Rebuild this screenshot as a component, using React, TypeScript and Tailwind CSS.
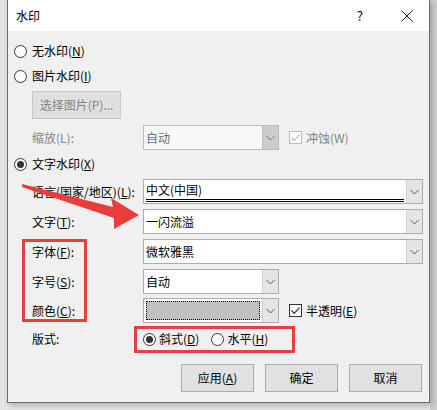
import React from "react";

const font = { fontFamily: '"Noto Sans CJK SC", "Noto Sans", sans-serif' };

function Radio({ checked }: { checked?: boolean }) {
  return (
    <span className="w-[13px] h-[13px] rounded-full border border-[#333] bg-white flex items-center justify-center shrink-0">
      {checked && <span className="w-[7px] h-[7px] rounded-full bg-[#333]" />}
    </span>
  );
}

function Check({ disabled }: { disabled?: boolean }) {
  return (
    <span
      className={
        "w-[13px] h-[13px] border bg-white flex items-center justify-center shrink-0 " +
        (disabled ? "border-[#bcbcbc]" : "border-[#333]")
      }
    >
      <svg width="11" height="11" viewBox="0 0 11 11">
        <path d="M1.5 5.5 L4.2 8.3 L9.6 2.6" fill="none" stroke={disabled ? "#bcbcbc" : "#333"} strokeWidth="1.2" />
      </svg>
    </span>
  );
}

function Chevron({ color = "#555" }: { color?: string }) {
  return (
    <svg width="9" height="6" viewBox="0 0 9 6">
      <path d="M0.5 1 L4.5 5 L8.5 1" fill="none" stroke={color} strokeWidth="1" />
    </svg>
  );
}

function Combo({
  text,
  wide,
  disabled,
  underline,
  color,
}: {
  text?: string;
  wide?: boolean;
  disabled?: boolean;
  underline?: boolean;
  color?: boolean;
}) {
  return (
    <div
      className={
        "h-[25px] flex border shrink-0 " +
        (wide ? "w-[280px] " : "w-[136px] ") +
        (disabled ? "border-[#bcbcbc] bg-[#f8f8f8]" : "border-[#adadad] bg-white")
      }
    >
      <div className={"flex-1 relative flex items-center px-[2px] " + (underline ? "pb-[3px]" : "")}>
        {color ? (
          <div className="absolute inset-[2px] bg-[#c0c0c0] border border-dotted border-black" />
        ) : (
          <span className={"text-[12px] leading-none " + (disabled ? "text-[#6d6d6d]" : "text-black")}>{text}</span>
        )}
        {underline && <div className="absolute left-[2px] right-[2px] bottom-[1px] h-[3px] border-y border-black" />}
      </div>
      <div
        className={
          "w-[16px] flex items-center justify-center border-l " +
          (disabled ? "bg-[#cccccc] border-[#bcbcbc]" : "bg-[#e5e5e5] border-[#d0d0d0]")
        }
      >
        <Chevron color={disabled ? "#777" : "#555"} />
      </div>
    </div>
  );
}

function Btn({ children, disabled, w = "w-[73px]" }: { children: React.ReactNode; disabled?: boolean; w?: string }) {
  return (
    <div
      className={
        w +
        " h-[28px] flex items-center justify-center text-[12px] border " +
        (disabled ? "bg-[#e0e0e0] border-[#c8c8c8] text-[#838383]" : "bg-[#e1e1e1] border-[#adadad] text-black")
      }
    >
      {children}
    </div>
  );
}

function Row({ label, children, mt }: { label: React.ReactNode; children: React.ReactNode; mt: string }) {
  return (
    <div className={"flex items-center h-[25px] " + mt}>
      <div className="w-[135px] shrink-0 pl-[24px] text-[12px] text-black whitespace-nowrap">{label}</div>
      {children}
    </div>
  );
}

export default function App() {
  return (
    <div className="w-[437px] h-[410px] bg-[#e4e4e4] relative overflow-hidden" style={font}>
      <div className="absolute left-[430px] top-[0px] w-[7px] h-[410px] bg-[#cfcfcf]" />
      <div className="ml-[7px] w-[423px] h-[403px] border-x border-b border-[#6b6b6b] bg-[#f0f0f0] flex flex-col relative shadow-[2px_2px_6px_rgba(0,0,0,0.25)]">
        {/* title */}
        <div className="h-[31px] bg-white flex items-center pl-[8px] pr-[14px] shrink-0">
          <span className="text-[12px] text-black">水印</span>
          <span className="ml-auto text-[13px] text-black mr-[38px]">?</span>
          <svg width="12" height="12" viewBox="0 0 12 12" className="mr-[2px]">
            <path d="M0.5 0.5 L11.5 11.5 M11.5 0.5 L0.5 11.5" stroke="#111" strokeWidth="1" />
          </svg>
        </div>
        {/* body */}
        <div className="flex flex-col">
          <div className="flex items-center h-[16px] mt-[12px] pl-[6px] gap-[5px] text-[12px] text-black">
            <Radio />
            <span>
              无水印(<span className="underline">N</span>)
            </span>
          </div>
          <div className="flex items-center h-[16px] mt-[9px] pl-[6px] gap-[5px] text-[12px] text-black">
            <Radio />
            <span>
              图片水印(<span className="underline">I</span>)
            </span>
          </div>
          <div className="pl-[24px] mt-[7px]">
            <Btn disabled w="w-[89px]">
              选择图片(P)...
            </Btn>
          </div>
          <div className="flex items-center h-[25px] mt-[6px]">
            <div className="w-[135px] shrink-0 pl-[24px] text-[12px] text-[#838383]">缩放(L):</div>
            <Combo text="自动" disabled />
            <div className="flex items-center ml-[10px] gap-[4px] text-[12px] text-[#838383]">
              <Check disabled />
              <span>冲蚀(W)</span>
            </div>
          </div>
          <div className="flex items-center h-[16px] mt-[6px] pl-[6px] gap-[5px] text-[12px] text-black">
            <Radio checked />
            <span>
              文字水印(<span className="underline">X</span>)
            </span>
          </div>
          <Row
            mt="mt-[7px]"
            label={
              <>
                语言(国家/地区)(<span className="underline">L</span>):
              </>
            }
          >
            <Combo text="中文(中国)" wide underline />
          </Row>
          <Row
            mt="mt-[5px]"
            label={
              <>
                文字(<span className="underline">T</span>):
              </>
            }
          >
            <Combo text="一闪流溢" wide />
          </Row>
          <Row
            mt="mt-[5px]"
            label={
              <>
                字体(<span className="underline">F</span>):
              </>
            }
          >
            <Combo text="微软雅黑" wide />
          </Row>
          <Row
            mt="mt-[5px]"
            label={
              <>
                字号(<span className="underline">S</span>):
              </>
            }
          >
            <Combo text="自动" />
          </Row>
          <Row
            mt="mt-[4px]"
            label={
              <>
                颜色(<span className="underline">C</span>):
              </>
            }
          >
            <Combo color />
            <div className="flex items-center ml-[10px] gap-[4px] text-[12px] text-black">
              <Check />
              <span>
                半透明(<span className="underline">E</span>)
              </span>
            </div>
          </Row>
          <div className="flex items-center h-[16px] mt-[8px]">
            <div className="w-[135px] shrink-0 pl-[24px] text-[12px] text-black">版式:</div>
            <div className="flex items-center gap-[3px] text-[12px] text-black">
              <Radio checked />
              <span>
                斜式(<span className="underline">D</span>)
              </span>
            </div>
            <div className="flex items-center gap-[3px] text-[12px] text-black ml-[12px]">
              <Radio />
              <span>
                水平(<span className="underline">H</span>)
              </span>
            </div>
          </div>
          <div className="flex justify-end gap-[11px] pr-[7px] mt-[17px]">
            <Btn>
              应用(<span className="underline">A</span>)
            </Btn>
            <Btn>确定</Btn>
            <Btn>取消</Btn>
          </div>
        </div>
      </div>
      {/* annotations */}
      <div className="absolute left-[22px] top-[239px] w-[65px] h-[83px] border-[3px] border-[#e8403f]" />
      <div className="absolute left-[134px] top-[326px] w-[161px] h-[27px] border-[3px] border-[#e8403f]" />
      <svg className="absolute left-0 top-0" width="437" height="410" viewBox="0 0 437 410">
        <polygon points="22,184 113,207 111,198 139,215 114,229 114,218 22,187" fill="#ea3d3a" />
      </svg>
    </div>
  );
}
